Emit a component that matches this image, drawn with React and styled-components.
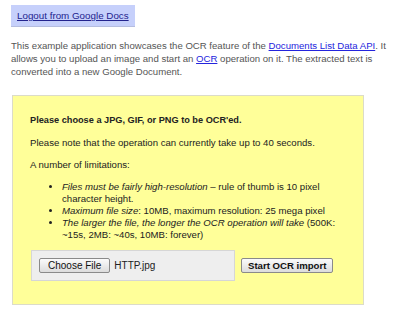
import styled, { createGlobalStyle } from "styled-components";

const GlobalStyle = createGlobalStyle`
body {
  margin: 0;
  background: #ffffff;
  font-family: "Liberation Sans", Arial, sans-serif;
}
`

const Pagina = styled.div`
padding: 5px 11px 0 11px;
width: 400px;
box-sizing: border-box;
`

const BarraLogout = styled.div`
display: inline-block;
background-color: #c6d0fb;
border-bottom: 1px solid #b5bde0;
padding: 5px 6px 5px 6px;
font-size: 9.8px;
line-height: 11px;
`

const LinkLogout = styled.a`
color: #23238e;
text-decoration: underline;
`

const Introducao = styled.p`
margin: 12px 0 0 0;
font-size: 9.6px;
line-height: 13px;
color: #555555;
`

const LinkAzul = styled.a`
color: #2424dd;
text-decoration: underline;
`

const CaixaAmarela = styled.div`
margin: 17px 0 0 1px;
width: 352px;
height: 210px;
box-sizing: border-box;
background-color: #ffff99;
border: 1px solid #dcdcc8;
padding: 18px 17px 0 17px;
color: #222222;
font-size: 9.6px;
line-height: 12px;
`

const Titulo = styled.p`
margin: 0;
font-weight: bold;
font-size: 9.2px;
line-height: 13px;
`

const Texto = styled.p`
margin: 10px 0 0 0;
`

const ListaLimites = styled.ul`
margin: 10px 0 0 0;
padding-left: 32px;
list-style: disc;
`

const Item = styled.li`
margin: 0;
`

const AreaEnvio = styled.form`
display: flex;
align-items: center;
margin: 9px 0 0 1px;
`

const CaixaArquivo = styled.div`
display: flex;
align-items: center;
gap: 4px;
width: 204px;
height: 31px;
box-sizing: border-box;
background-color: #eeeeee;
border: 1px solid #d6d6d6;
padding: 0 0 0 7px;
`

const Botao = styled.button`
font-family: "Liberation Sans", Arial, sans-serif;
font-size: ${props => props.negrito ? "9.6px" : "10px"};
line-height: 11px;
height: 15px;
padding: 0 ${props => props.negrito ? "6px" : "8px"};
color: #111111;
font-weight: ${props => props.negrito ? "bold" : "normal"};
background: linear-gradient(#fbfbfb, #dcdcdc);
border: 1px solid #8a8a8a;
border-radius: 2px;
margin-left: ${props => props.margem || "0"};
`

const NomeArquivo = styled.span`
font-size: 10px;
color: #222222;
`

function App() {
    return(
        <Pagina>
            <GlobalStyle />
            <BarraLogout>
                <LinkLogout href="#">Logout from Google Docs</LinkLogout>
            </BarraLogout>
            <Introducao>
                This example application showcases the OCR feature of the <LinkAzul href="#">Documents List Data API</LinkAzul>. It allows you to upload an image and start an <LinkAzul href="#">OCR</LinkAzul> operation on it. The extracted text is converted into a new Google Document.
            </Introducao>
            <CaixaAmarela>
                <Titulo>Please choose a JPG, GIF, or PNG to be OCR'ed.</Titulo>
                <Texto>Please note that the operation can currently take up to 40 seconds.</Texto>
                <Texto>A number of limitations:</Texto>
                <ListaLimites>
                    <Item><em>Files must be fairly high-resolution</em> – rule of thumb is 10 pixel character height.</Item>
                    <Item><em>Maximum file size</em>: 10MB, maximum resolution: 25 mega pixel</Item>
                    <Item><em>The larger the file, the longer the OCR operation will take</em> (500K: ~15s, 2MB: ~40s, 10MB: forever)</Item>
                </ListaLimites>
                <AreaEnvio onSubmit={e => e.preventDefault()}>
                    <CaixaArquivo>
                        <Botao type="button">Choose File</Botao>
                        <NomeArquivo>HTTP.jpg</NomeArquivo>
                    </CaixaArquivo>
                    <Botao type="submit" negrito margem="6px">Start OCR import</Botao>
                </AreaEnvio>
            </CaixaAmarela>
        </Pagina>
    )
}

export default App
